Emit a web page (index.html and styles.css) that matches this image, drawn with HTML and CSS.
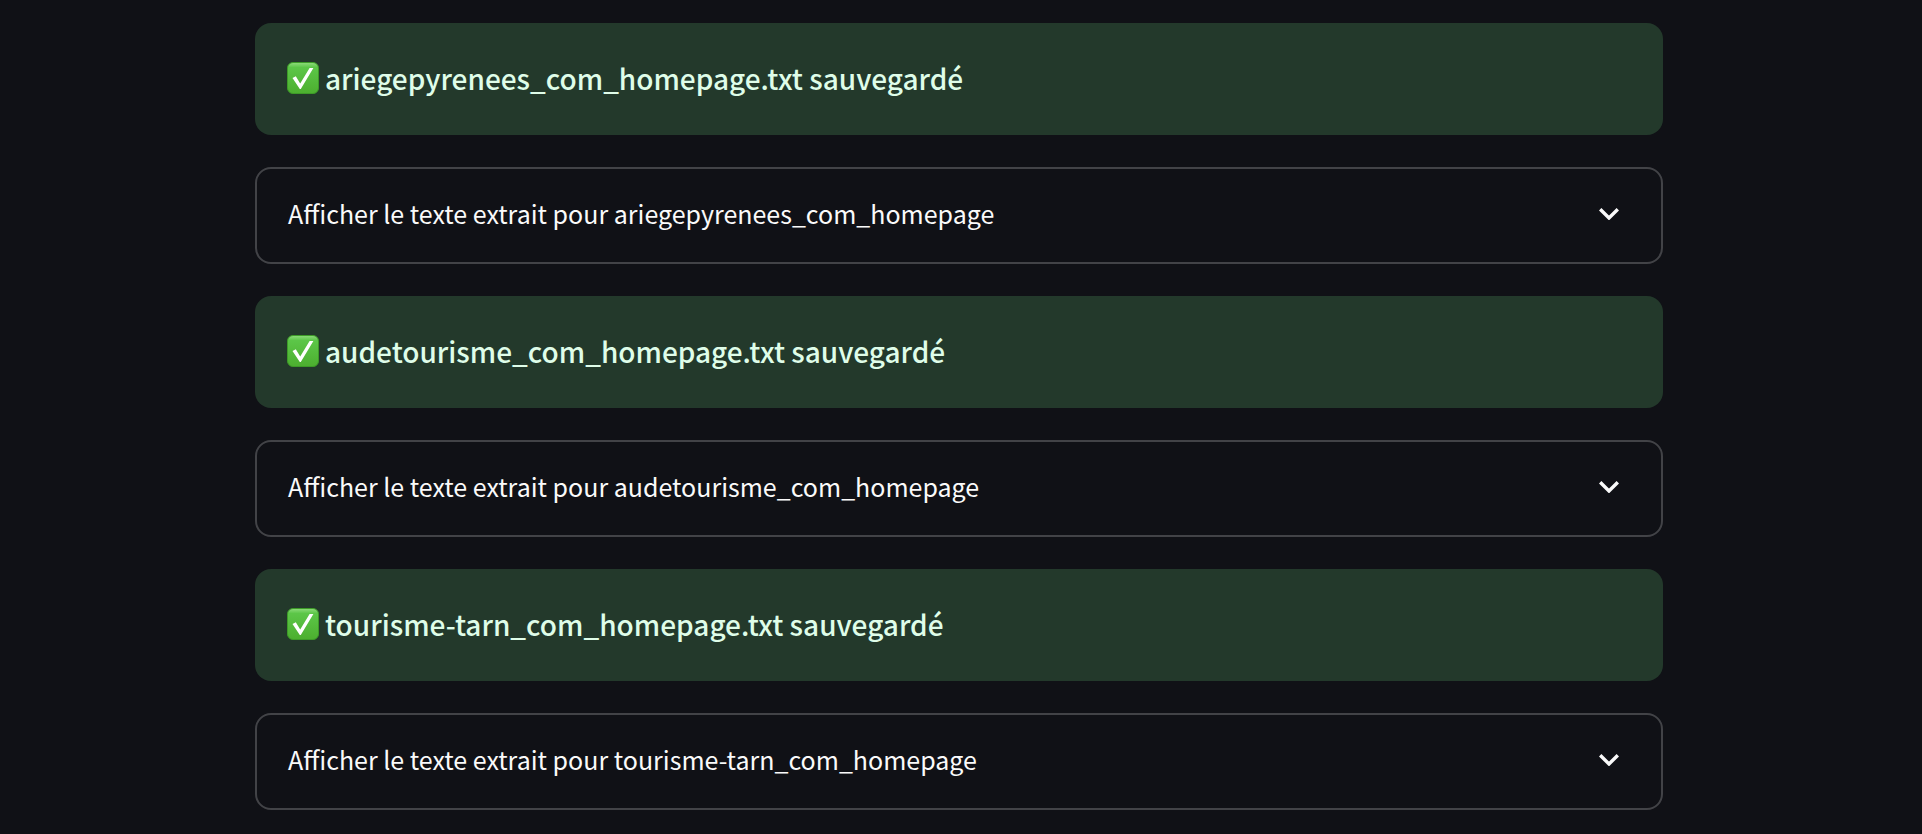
FILE: index.html
```html
<!DOCTYPE html>
<html lang="fr">
<head>
    <meta charset="UTF-8">
    <meta name="viewport" content="width=device-width, initial-scale=1.0">
    <title>Extraction de textes</title>
    <link rel="stylesheet" href="styles.css">
</head>
<body>
    <!-- Shared icons -->
    <svg class="icon-defs" aria-hidden="true">
        <defs>
            <linearGradient id="check-fill" x1="0" y1="0" x2="0" y2="1">
                <stop offset="0" stop-color="#8fdc7c"/>
                <stop offset="0.16" stop-color="#5cc648"/>
                <stop offset="1" stop-color="#4caf2f"/>
            </linearGradient>
            <symbol id="icon-check" viewBox="0 0 32 32">
                <rect x="0.5" y="0.5" width="31" height="31" rx="5.5" fill="url(#check-fill)" stroke="#3d9a28"/>
                <path d="M5.5 16L8.8 14.2L13.2 21.5L22.6 6H26.4L13.8 27H12.8Z" fill="#fff"/>
            </symbol>
            <symbol id="icon-chevron" viewBox="0 0 20 12">
                <path d="M1.2 1.2L10 10L18.8 1.2" fill="none" stroke="#fafafa" stroke-width="3.4"/>
            </symbol>
        </defs>
    </svg>

    <main class="container">
        <div class="alert" role="alert">
            <svg class="check" role="img" aria-label="Succès"><use href="#icon-check"/></svg>
            <p>ariegepyrenees_com_homepage.txt sauvegardé</p>
        </div>
        <details class="expander">
            <summary>
                <span>Afficher le texte extrait pour ariegepyrenees_com_homepage</span>
                <svg class="chevron" aria-hidden="true"><use href="#icon-chevron"/></svg>
            </summary>
        </details>

        <div class="alert" role="alert">
            <svg class="check" role="img" aria-label="Succès"><use href="#icon-check"/></svg>
            <p>audetourisme_com_homepage.txt sauvegardé</p>
        </div>
        <details class="expander">
            <summary>
                <span>Afficher le texte extrait pour audetourisme_com_homepage</span>
                <svg class="chevron" aria-hidden="true"><use href="#icon-chevron"/></svg>
            </summary>
        </details>

        <div class="alert" role="alert">
            <svg class="check" role="img" aria-label="Succès"><use href="#icon-check"/></svg>
            <p>tourisme-tarn_com_homepage.txt sauvegardé</p>
        </div>
        <details class="expander">
            <summary>
                <span>Afficher le texte extrait pour tourisme-tarn_com_homepage</span>
                <svg class="chevron" aria-hidden="true"><use href="#icon-chevron"/></svg>
            </summary>
        </details>
    </main>
</body>
</html>
```

FILE: styles.css
```css
* {
    box-sizing: border-box;
}
body {
    margin: 0;
    padding: 23px 4px 23px 0;
    background-color: #101116;
    color: #fafafa;
    font-family: "Source Sans Pro", "Noto Sans CJK SC", sans-serif;
}
.icon-defs {
    position: absolute;
    width: 0;
    height: 0;
}
.container {
    display: flex;
    flex-direction: column;
    gap: 32px;
    max-width: 1408px;
    margin: 0 auto;
}

/* Success message */
.alert {
    display: flex;
    align-items: center;
    gap: 6px;
    padding: 31px 32px 33px;
    border-radius: 16px;
    background-color: #23392b;
    color: #dffde9;
    font-size: 28px;
    font-weight: 500;
    line-height: 48px;
}
.alert p {
    margin: 0;
}
.check {
    flex: none;
    width: 32px;
    height: 32px;
}

/* Collapsed text block */
.expander {
    border: 2px solid #424347;
    border-radius: 16px;
}
.expander summary {
    display: flex;
    align-items: center;
    justify-content: space-between;
    padding: 22px 42px 26px 31px;
    font-size: 25px;
    line-height: 45px;
    list-style: none;
    cursor: pointer;
}
.expander summary::-webkit-details-marker {
    display: none;
}
.chevron {
    flex: none;
    width: 20px;
    height: 12px;
}
```
